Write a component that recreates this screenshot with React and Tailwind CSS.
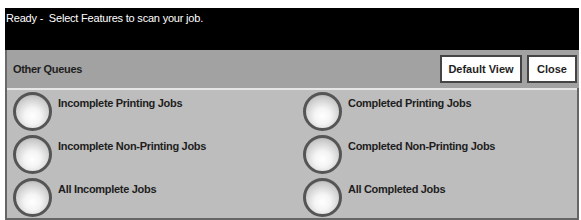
const font = { fontFamily: '"Liberation Sans", Arial, sans-serif' };

const left = ["Incomplete Printing Jobs", "Incomplete Non-Printing Jobs", "All Incomplete Jobs"];
const right = ["Completed Printing Jobs", "Completed Non-Printing Jobs", "All Completed Jobs"];

function Radio({ label }) {
  return (
    <div className="flex items-start h-[43px]">
      <div className="w-[39px] h-[39px] shrink-0 rounded-full border-[3px] border-[#555] bg-[radial-gradient(circle_at_50%_64%,#ffffff_0%,#f4f4f4_30%,#c8c8c8_72%,#8a8a8a_100%)]" />
      <span className="ml-[6px] mt-[3px] text-[11px] font-bold text-[#1e1e1e] tracking-[-0.3px]">{label}</span>
    </div>
  );
}

export default function App() {
  return (
    <div className="w-[581px] h-[220px] bg-white pt-[8px] pl-[5px] pr-[2px] overflow-hidden" style={font}>
      <div className="bg-black h-[42px] px-[1px] pt-[4px]">
        <div className="text-white text-[11px] leading-[12px] tracking-[-0.2px]">Ready -&nbsp; Select Features to scan your job.</div>
      </div>
      <div className="h-[38px] bg-[#a2a2a2] border-l-2 border-[#6a6a6a] flex items-center justify-between pl-[6px] pr-[2px]">
        <span className="text-[11px] font-bold text-[#1e1e1e] tracking-[-0.3px]">Other Queues</span>
        <div className="flex gap-[5px]">
          <div className="w-[82px] h-[28px] bg-white border-2 border-[#444] flex items-center justify-center text-[11px] font-bold text-[#1e1e1e]">Default View</div>
          <div className="w-[50px] h-[28px] bg-white border-2 border-[#444] flex items-center justify-center text-[11px] font-bold text-[#1e1e1e]">Close</div>
        </div>
      </div>
      <div className="h-[132px] bg-[#bdbdbd] border-2 border-t-0 border-[#666] shadow-[inset_0_2px_0_#e6e6e6] grid grid-cols-2 pt-[4px]">
        <div className="pl-[6px]">
          {left.map((l) => <Radio key={l} label={l} />)}
        </div>
        <div className="pl-[11px]">
          {right.map((l) => <Radio key={l} label={l} />)}
        </div>
      </div>
    </div>
  );
}
